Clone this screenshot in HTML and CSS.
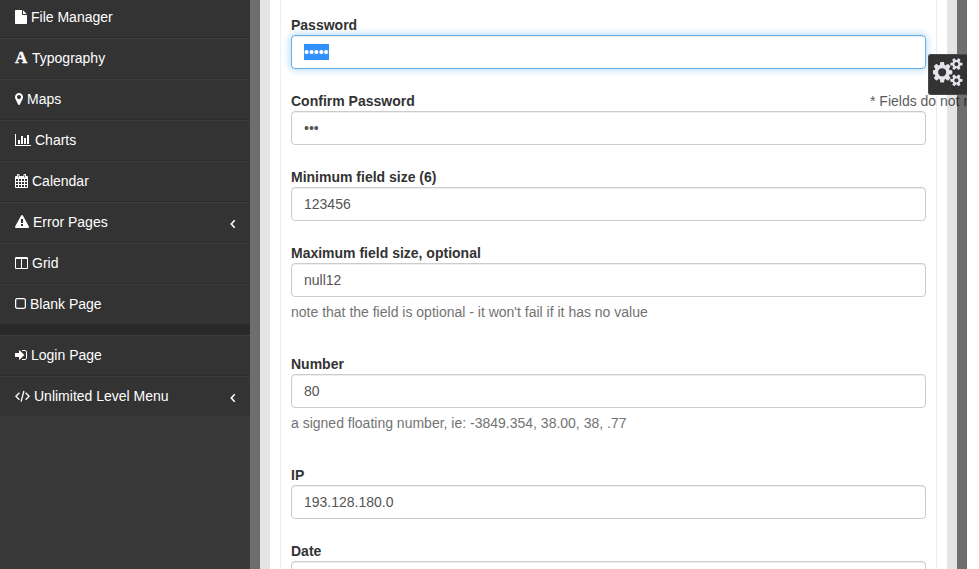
FILE: index.html
```html
<!DOCTYPE html>
<html lang="en">
<head>
<meta charset="utf-8">
<title>Form Validation</title>
<link rel="stylesheet" href="styles.css">
</head>
<body>
<div class="page">
  <nav class="sidebar">
    <ul class="menu">
      <li><svg width="12" height="14" viewBox="128 0 1536 1792"><path d="M1152 512v-472q22 14 36 28l408 408q14 14 28 36h-472zm-128 32q0 40 28 68t68 28h544v1056q0 40-28 68t-68 28h-1344q-40 0-68-28t-28-68v-1600q0-40 28-68t68-28h800v544z"/></svg><span>File Manager</span></li>
      <li><b class="serif-icon">A</b><span>Typography</span></li>
      <li><svg width="8" height="14" viewBox="384 0 1024 1792"><path d="M1152 640q0-106-75-181t-181-75-181 75-75 181 75 181 181 75 181-75 75-181zm256 0q0 109-33 179l-364 774q-16 33-47.500 52t-67.500 19-67.500-19-46.500-52l-365-774q-33-70-33-179 0-212 150-362t362-150 362 150 150 362z"/></svg><span>Maps</span></li>
      <li><svg width="16" height="14" viewBox="0 0 2048 1792"><path d="M640 896v512h-256v-512h256zm384-512v1024h-256v-1024h256zm1024 1152v128h-2048v-1536h128v1408h1920zm-640-896v768h-256v-768h256zm384-384v1152h-256v-1152h256z"/></svg><span>Charts</span></li>
      <li><svg width="13" height="14" viewBox="0 0 13 14"><path fill-rule="evenodd" d="M1 2h1V1q0-1 1-1h.5q1 0 1 1v1h4V1q0-1 1-1h.5q1 0 1 1v1h1q1 0 1 1v10q0 1-1 1H1q-1 0-1-1V3q0-1 1-1zM3 1v2.500h.6V1zM9.400 1v2.500h.6V1zM1 5v2h2V5zM4 5v2h2V5zM7 5v2h2V5zM10 5v2h2V5zM1 8v2h2V8zM4 8v2h2V8zM7 8v2h2V8zM10 8v2h2V8zM1 11v2h2v-2zM4 11v2h2v-2zM7 11v2h2v-2zM10 11v2h2v-2z"/></svg><span>Calendar</span></li>
      <li><svg width="14" height="14" viewBox="0 0 1792 1792"><path d="M1024 1375v-190q0-14-9.500-23.500t-22.500-9.500h-192q-13 0-22.500 9.500t-9.500 23.500v190q0 14 9.500 23.500t22.500 9.500h192q13 0 22.500-9.500t9.500-23.500zm-2-374l18-459q0-12-10-19-13-11-24-11h-220q-11 0-24 11-10 7-10 21l17 457q0 10 10 16.500t24 6.500h185q14 0 23.500-6.500t10.500-16.500zm-14-934l768 1408q35 63-2 126-17 29-46.500 46t-63.500 17h-1536q-34 0-63.500-17t-46.500-46q-37-63-2-126l768-1408q17-31 47-49t65-18 65 18 47 49z"/></svg><span>Error Pages</span><svg class="arrow" width="6" height="10" viewBox="0 0 6 10"><path d="M4.700 1.200 1.300 5l3.400 3.800"/></svg></li>
      <li><svg width="13" height="14" viewBox="64 0 1664 1792"><path d="M224 1536h608v-1152h-640v1120q0 13 9.500 22.500t22.500 9.500zm1376-32v-1120h-640v1152h608q13 0 22.500-9.500t9.500-22.500zm128-1216v1216q0 66-47 113t-113 47h-1344q-66 0-113-47t-47-113v-1216q0-66 47-113t113-47h1344q66 0 113 47t47 113z"/></svg><span>Grid</span></li>
      <li><svg class="line" width="11" height="14" viewBox="0 0 11 14"><rect x=".6" y="1.600" width="9.800" height="9.800" rx="1.700"/></svg><span>Blank Page</span></li>
    </ul>
    <ul class="menu">
      <li><svg width="12" height="14" viewBox="128 0 1536 1792"><path d="M1312 896q0 26-19 45l-544 544q-19 19-45 19t-45-19-19-45v-288h-448q-26 0-45-19t-19-45v-384q0-26 19-45t45-19h448v-288q0-26 19-45t45-19 45 19l544 544q19 19 19 45zm352-352v704q0 119-84.500 203.500t-203.500 84.500h-320q-13 0-22.500-9.500t-9.500-22.500q0-4-1-20t-.5-26.500 3-23.500 10-19.500 20.500-6.500h320q66 0 113-47t47-113v-704q0-66-47-113t-113-47h-312l-11.500-1-11.500-3-8-5.500-7-9-2-13.500q0-4-1-20t-.5-26.500 3-23.500 10-19.500 20.500-6.500h320q119 0 203.500 84.500t84.500 203.500z"/></svg><span>Login Page</span></li>
      <li><svg class="line" width="15" height="14" viewBox="0 0 15 14"><path d="M4.400 3.800.9 7.300l3.500 3.500M10.600 3.800l3.500 3.500-3.500 3.500M8.900 2 6.100 12.600"/></svg><span>Unlimited Level Menu</span><svg class="arrow" width="6" height="10" viewBox="0 0 6 10"><path d="M4.700 1.200 1.300 5l3.400 3.800"/></svg></li>
    </ul>
  </nav>
  <main class="content">
    <div class="outer">
      <form class="panel">
        <div class="field"><label>Password</label><div class="control focus"><span class="selected">•••••</span></div></div>
        <div class="field"><label>Confirm Password</label><span class="error">* Fields do not match</span><div class="control">•••</div></div>
        <div class="field"><label>Minimum field size (6)</label><div class="control">123456</div></div>
        <div class="field"><label>Maximum field size, optional</label><div class="control">null12</div><p class="help">note that the field is optional - it won't fail if it has no value</p></div>
        <div class="field"><label>Number</label><div class="control">80</div><p class="help">a signed floating number, ie: -3849.354, 38.00, 38, .77</p></div>
        <div class="field"><label>IP</label><div class="control">193.128.180.0</div></div>
        <div class="field"><label>Date</label><div class="control"></div></div>
      </form>
    </div>
  </main>
  <div class="settings"><svg width="30.500" height="28.500" viewBox="0 0 1920 1792"><path d="M832 896q0-106-75-181t-181-75-181 75-75 181 75 181 181 75 181-75 75-181zm768 512q0-52-38-90t-90-38-90 38-38 90q0 53 37.500 90.500t90.500 37.500 90.500-37.500 37.500-90.500zm0-1024q0-52-38-90t-90-38-90 38-38 90q0 53 37.500 90.500t90.500 37.500 90.500-37.500 37.500-90.500zm-384 421v185q0 10-7 19.500t-16 10.500l-155 24q-11 35-32 76 34 48 90 115 7 11 7 20 0 12-7 19-23 30-82.500 89.500t-78.500 59.500q-11 0-21-7l-115-90q-37 19-77 31-11 108-23 155-7 24-30 24h-186q-11 0-20-7.500t-10-17.500l-23-153q-34-10-75-31l-118 89q-7 7-20 7-11 0-21-8-144-133-144-160 0-9 7-19 10-14 41-53t47-61q-23-44-35-82l-152-24q-10-1-17-9.500t-7-19.500v-185q0-10 7-19.500t16-10.500l155-24q11-35 32-76-34-48-90-115-7-11-7-20 0-12 7-20 22-30 82-89t79-59q11 0 21 7l115 90q34-18 77-32 11-108 23-154 7-24 30-24h186q11 0 20 7.500t10 17.500l23 153q34 10 75 31l118-89q8-7 20-7 11 0 21 8 144 133 144 160 0 8-7 19-12 16-42 54t-45 60q23 48 34 82l152 23q10 2 17 10.500t7 19.500zm640 533v140q0 16-149 31-12 27-30 52 51 113 51 138 0 4-4 7-122 71-124 71-8 0-46-47t-52-68q-20 2-30 2t-30-2q-14 21-52 68t-46 47q-2 0-124-71-4-3-4-7 0-25 51-138-18-25-30-52-149-15-149-31v-140q0-16 149-31 13-29 30-52-51-113-51-138 0-4 4-7 4-2 35-20t59-34 30-16q8 0 46 46.500t52 67.500q20-2 30-2t30 2q51-71 92-112l6-2q4 0 124 70 4 3 4 7 0 25-51 138 17 23 30 52 149 15 149 31zm0-1024v140q0 16-149 31-12 27-30 52 51 113 51 138 0 4-4 7-122 71-124 71-8 0-46-47t-52-68q-20 2-30 2t-30-2q-14 21-52 68t-46 47q-2 0-124-71-4-3-4-7 0-25 51-138-18-25-30-52-149-15-149-31v-140q0-16 149-31 13-29 30-52-51-113-51-138 0-4 4-7 4-2 35-20t59-34 30-16q8 0 46 46.500t52 67.500q20-2 30-2t30 2q51-71 92-112l6-2q4 0 124 70 4 3 4 7 0 25-51 138 17 23 30 52 149 15 149 31z"/></svg></div>
</div>
</body>
</html>
```

FILE: styles.css
```css
* { box-sizing: border-box; }
body {
  margin: 0;
  background: #fff;
  font: 14px/20px "Liberation Sans", Arial, sans-serif;
  color: #333;
  overflow: hidden;
}
.page {
  position: relative;
  display: flex;
  width: 967px;
  height: 569px;
  overflow: hidden;
}
.sidebar {
  width: 250px;
  background: #393939;
  color: #fff;
  overflow: hidden;
}
.menu {
  list-style: none;
  margin: -3px 0 0;
  padding: 0;
  background: #333;
}
.menu + .menu { margin: 0; border-top: 11px solid #292929; }
.menu li {
  display: flex;
  align-items: center;
  gap: 4px;
  height: 41px;
  padding: 0 14px 2px 15px;
  border-top: 1px solid #3d3d3d;
  border-bottom: 1px solid #2d2d2d;
}
.menu li:last-child { height: 40px; border-bottom: 0; }
.menu svg { fill: #fff; flex: none; }
.menu .line { fill: none; stroke: #fff; stroke-width: 1.3; }
.menu .arrow {
  fill: none;
  stroke: #fff;
  stroke-width: 1.6;
  margin: 5px 0 0 auto;
}
.serif-icon {
  width: 13px;
  font: bold 17px/18px "Liberation Serif", serif;
  -webkit-text-stroke: .4px #fff;
}
.content {
  width: 717px;
  border: solid #6e6e6e;
  border-width: 0 10px;
}
.outer {
  height: 569px;
  border: solid #e4e4e4;
  border-width: 0 10px;
  padding: 0 10px;
}
.panel {
  height: 569px;
  padding: 15px 10px 0;
  border: solid #eee;
  border-width: 0 1px;
}
.field { position: relative; margin-bottom: 22px; }
.field label { display: block; font-weight: bold; }
.control {
  height: 34px;
  padding: 6px 12px;
  border: 1px solid #ccc;
  border-radius: 4px;
  background: #fff;
  color: #555;
  box-shadow: inset 0 1px 1px rgba(0, 0, 0, .075);
}
.focus {
  border-color: #66afe9;
  box-shadow: inset 0 1px 1px rgba(0, 0, 0, .075), 0 0 8px rgba(102, 175, 233, .6);
}
.selected { background: #3390ff; color: #fff; }
.help { margin: 5px 0 32px; color: #737373; }
.error {
  position: absolute;
  top: 0;
  left: 579px;
  white-space: nowrap;
  color: #000;
  opacity: .65;
}
.settings {
  position: absolute;
  top: 54px;
  right: 0;
  width: 39px;
  height: 41px;
  padding: 3px 0 0 4px;
  border: 1px solid #484848;
  border-right: 0;
  border-radius: 3px 0 0 3px;
  background: #333;
}
.settings svg { display: block; fill: #e3e3ec; }
```
